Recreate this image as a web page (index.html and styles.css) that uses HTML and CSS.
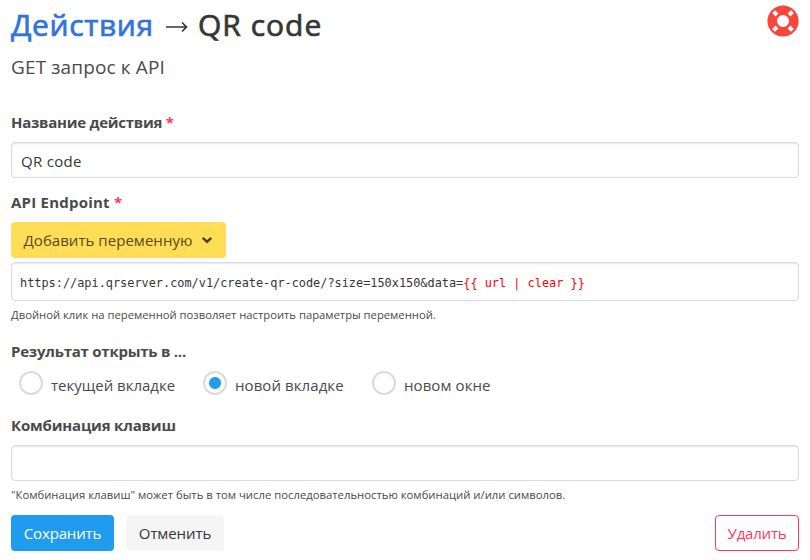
FILE: index.html
```html
<!DOCTYPE html>
<html lang="ru">
<head>
<meta charset="utf-8">
<title>QR code</title>
<link rel="stylesheet" href="styles.css">
</head>
<body>
<main class="page">
  <header class="head">
    <h1 class="title"><a class="crumb" href="#">Действия</a><svg class="arrow" viewBox="0 0 24 12"><path d="M1 6H21.500M17 1.500L21.500 6L17 10.500"/></svg><span class="name">QR code</span></h1>
    <svg class="help" viewBox="0 0 32 32">
      <circle cx="16" cy="16" r="10.8" fill="none" stroke="#f9463a" stroke-width="9.6"/>
      <path d="M6.600 6.600L10 10M25.400 6.600L22 10M6.600 25.400L10 22M25.400 25.400L22 22" stroke="#fff" stroke-width="4"/>
    </svg>
  </header>
  <p class="subtitle">GET запрос к API</p>
  <form class="form">
    <label class="label label-name">Название действия <span class="star">*</span></label>
    <div class="input"><span class="value">QR code</span></div>
    <label class="label label-api">API Endpoint <span class="star">*</span></label>
    <button class="button warning" type="button"><span class="t-add">Добавить переменную</span><svg class="chevron" viewBox="0 0 12 8"><path d="M1.8 1.8L6 5.8L10.200 1.8"/></svg></button>
    <div class="input code"><span>https://api.qrserver.com/v1/create-qr-code/?size=150x150&amp;data=<span class="var">{{ url | clear }}</span></span></div>
    <p class="hint hint-api">Двойной клик на переменной позволяет настроить параметры переменной.</p>
    <label class="label label-open">Результат открыть в ...</label>
    <div class="radios">
      <label class="radio"><i class="dot"></i><span class="r1">текущей вкладке</span></label>
      <label class="radio"><i class="dot on"></i><span class="r2">новой вкладке</span></label>
      <label class="radio"><i class="dot"></i><span class="r3">новом окне</span></label>
    </div>
    <label class="label label-keys">Комбинация клавиш</label>
    <div class="input"></div>
    <p class="hint hint-keys">"Комбинация клавиш" может быть в том числе последовательностью комбинаций и/или символов.</p>
    <div class="actions">
      <button class="button save" type="button"><span class="t-save">Сохранить</span></button>
      <button class="button cancel" type="button"><span class="t-cancel">Отменить</span></button>
      <button class="button remove" type="button"><span class="t-remove">Удалить</span></button>
    </div>
  </form>
</main>
</body>
</html>
```
FILE: styles.css
```css
* { box-sizing: border-box; }
body { margin: 0; background: #fff; color: #4a4a4a; font: 16px/24px "Open Sans", "Noto Sans", sans-serif; }
.page { height: 560px; padding: 4px 11px 0; overflow: hidden; }
.head { display: flex; justify-content: space-between; height: 42px; }
.title { display: flex; align-items: center; height: 42px; margin: 0; font-size: 30px; font-weight: 400; line-height: 42px; white-space: nowrap; color: #363636; -webkit-text-stroke: .7px currentColor; }
.crumb { width: 142px; color: #3273dc; letter-spacing: .6px; text-decoration: none; }
.name { letter-spacing: 1px; }
.arrow { width: 24px; height: 12px; margin: 3px 9px 0 12px; fill: none; stroke: #363636; stroke-width: 1.7; }
.help { width: 32px; height: 32px; margin-top: 1px; }
.subtitle { height: 24px; margin: 9px 0 31px; font-size: 19px; font-weight: 400; letter-spacing: .13px; white-space: nowrap; }
.form { display: flex; flex-direction: column; margin: 0; }
.label { display: block; height: 24px; font-size: 15px; font-weight: 700; white-space: nowrap; }
.label-name { margin-bottom: 1px; letter-spacing: -.26px; }
.star { color: #ff3860; }
.input { display: flex; align-items: center; height: 36px; margin-top: 7px; padding: 2px 9px 0; border: 1px solid #dbdbdb; border-radius: 4px; box-shadow: inset 0 1px 2px rgba(10,10,10,.1); color: #363636; font-size: 15px; white-space: nowrap; }
.value { letter-spacing: .3px; }
.label-api { margin-top: 12px; letter-spacing: .22px; }
.button { display: flex; align-items: center; justify-content: center; height: 36px; padding: 0; border: 0; border-radius: 4px; font: 15px/24px "Open Sans", "Noto Sans", sans-serif; white-space: nowrap; }
.warning { width: 215px; margin-top: 8px; background: #ffdd57; color: #534a22; }
.t-add { letter-spacing: .04px; }
.chevron { width: 12px; height: 8px; margin: 0 0 1px 9px; fill: none; stroke: #453e1f; stroke-width: 2.5; }
.code { height: 39px; margin-top: 4px; padding-left: 8px; font: 11.89px/20px "DejaVu Sans Mono", monospace; }
.var { color: #f00; }
.hint { height: 18px; margin: 5px 0 0; font-size: 11.25px; line-height: 18px; white-space: nowrap; }
.hint-keys { font-size: 11.3px; }
.label-open { margin-top: 15px; letter-spacing: -.23px; }
.radios { display: flex; height: 24px; margin: 8px 0 0 8px; }
.radio { display: flex; align-items: flex-start; white-space: nowrap; font-size: 15px; }
.radio:nth-child(1) { width: 184px; }
.radio:nth-child(2) { width: 169px; }
.radio span { margin: 2px 0 0 8px; }
.r2, .r3 { letter-spacing: .08px; }
.dot { width: 24px; height: 24px; border: 2px solid #dbdbdb; border-radius: 50%; }
.on { background: radial-gradient(circle, #209cee 5.5px, transparent 6.5px); }
.label-keys { margin: 18px 0 1px; letter-spacing: -.18px; }
.actions { display: flex; margin-top: 11px; }
.save { width: 103px; margin-right: 12px; background: #209cee; color: #fff; }
.t-save { letter-spacing: -.15px; }
.t-cancel { letter-spacing: -.1px; }
.cancel { width: 98px; background: #f5f5f5; color: #363636; }
.remove { width: 84px; margin-left: auto; border: 1px solid #ff3860; background: #fff; color: #ff3860; }
.t-remove { letter-spacing: -.2px; }
```
